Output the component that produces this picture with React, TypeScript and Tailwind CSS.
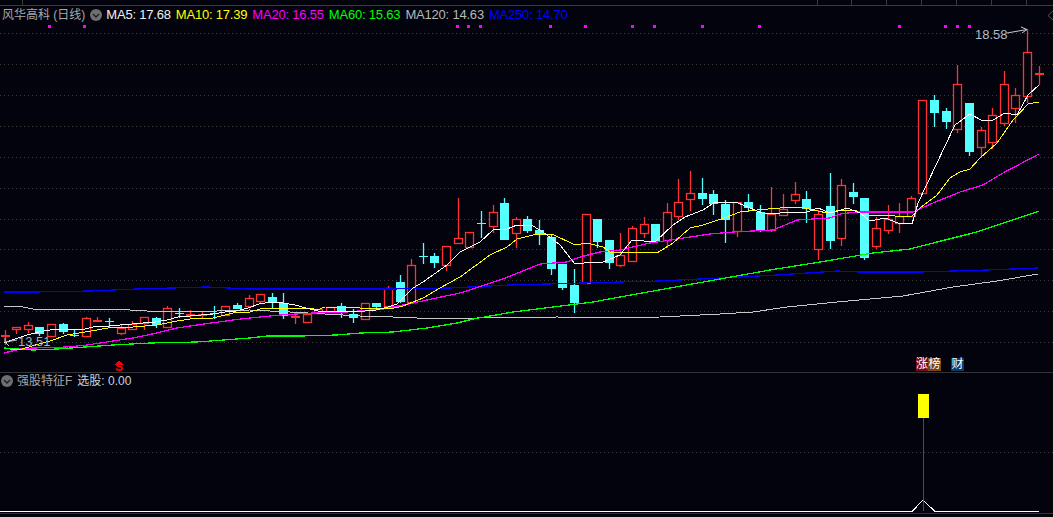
import React from 'react';

type Candle = [number, number, number, number, 'r' | 'c'];

// top, bottom, wick top, wick bottom, colour
const candles: Candle[] = [
  [335, 336, 330, 345, 'r'], [327, 329, 327, 334, 'r'], [325, 329, 322, 333, 'r'], [327, 333, 327, 336, 'c'],
  [324, 336, 324, 336, 'r'], [324, 331, 323, 334, 'c'], [335, 335, 329, 337, 'c'], [318, 336, 317, 337, 'r'],
  [320, 321, 317, 322, 'r'], [321, 322, 318, 327, 'c'], [328, 333, 324, 335, 'r'], [324, 329, 321, 330, 'r'],
  [317, 323, 317, 330, 'r'], [318, 324, 317, 328, 'c'], [308, 327, 306, 327, 'r'], [313, 313, 308, 318, 'c'],
  [314, 315, 310, 319, 'r'], [314, 314, 311, 318, 'r'], [313, 313, 306, 319, 'c'], [306, 315, 306, 316, 'r'],
  [305, 308, 303, 309, 'c'], [298, 306, 295, 307, 'r'], [294, 301, 294, 304, 'r'], [297, 301, 293, 309, 'c'],
  [303, 315, 293, 319, 'c'], [316, 317, 312, 324, 'r'], [314, 322, 314, 323, 'r'], [309, 313, 309, 313, 'r'],
  [307, 312, 307, 313, 'r'], [306, 312, 303, 318, 'c'], [314, 317, 309, 323, 'c'], [303, 319, 303, 319, 'r'],
  [303, 306, 303, 309, 'c'], [288, 306, 286, 308, 'r'], [282, 301, 275, 303, 'c'], [265, 302, 259, 303, 'r'],
  [256, 256, 243, 264, 'c'], [256, 262, 253, 268, 'c'], [246, 265, 246, 271, 'r'], [238, 243, 198, 243, 'r'],
  [232, 247, 232, 247, 'r'], [223, 223, 211, 238, 'c'], [212, 226, 205, 233, 'r'], [203, 239, 198, 239, 'c'],
  [219, 233, 217, 248, 'r'], [219, 230, 216, 233, 'c'], [230, 233, 220, 245, 'c'], [237, 268, 235, 275, 'c'],
  [264, 287, 264, 290, 'c'], [285, 302, 269, 313, 'c'], [214, 283, 214, 283, 'r'], [219, 241, 219, 248, 'c'],
  [240, 262, 240, 269, 'c'], [255, 265, 233, 267, 'r'], [228, 261, 226, 262, 'r'], [224, 233, 217, 238, 'r'],
  [224, 240, 224, 240, 'c'], [212, 240, 203, 248, 'r'], [202, 216, 179, 220, 'r'], [193, 199, 171, 211, 'r'],
  [193, 198, 178, 205, 'c'], [194, 203, 190, 215, 'c'], [204, 219, 200, 243, 'c'], [202, 231, 202, 237, 'r'],
  [202, 207, 194, 212, 'c'], [212, 230, 205, 232, 'c'], [214, 230, 187, 232, 'r'], [209, 215, 194, 216, 'r'],
  [194, 200, 182, 204, 'r'], [199, 208, 191, 223, 'c'], [214, 249, 210, 260, 'r'], [206, 240, 173, 249, 'c'],
  [185, 238, 179, 246, 'r'], [192, 196, 183, 204, 'c'], [198, 257, 198, 260, 'c'], [228, 246, 217, 249, 'r'],
  [219, 230, 205, 234, 'r'], [216, 223, 203, 233, 'r'], [198, 216, 196, 216, 'r'], [100, 193, 100, 193, 'r'],
  [100, 112, 95, 127, 'c'], [111, 121, 108, 129, 'c'], [84, 129, 65, 133, 'r'], [103, 151, 103, 156, 'c'],
  [130, 147, 127, 158, 'r'], [115, 142, 108, 149, 'r'], [84, 123, 71, 126, 'r'], [95, 108, 88, 123, 'r'],
  [52, 96, 29, 103, 'r'], [73, 74, 66, 85, 'r'],
];

const ma5 =
  '4,343 15,339 27,335 39,332 50,330 62,329 74,330 85,329 97,326 109,326 120,325 132,324 143,323 155,322 167,320 178,317 190,316 201,315 213,314 225,312 236,311 248,308 259,304 271,302 283,303 295,305 306,308 318,311 330,312 341,311 353,312 365,311 376,310 388,307 397,304 413,288 423,282 447,265 460,252 480,242 493,230 507,229 517,225 533,226 543,232 560,245 575,264 593,262 603,262 620,255 632,240 655,242 673,225 685,217 703,210 715,202 738,203 750,208 762,213 780,213 807,212 818,208 830,213 838,211 847,208 860,213 870,221 885,218 898,223 912,224 918,203 955,125 970,114 983,121 993,120 1005,113 1017,115 1028,95 1039,85';
const ma10 =
  '10,350 22,349 39,344 50,341 67,335 97,330 113,327 133,327 157,325 177,321 197,318 213,318 233,313 250,312 260,309 270,308 310,308 317,310 325,307 360,308 390,309 403,306 423,298 440,288 460,277 490,255 507,247 517,239 537,234 552,234 575,245 587,243 603,247 610,252 650,252 657,253 673,243 690,228 703,225 727,217 740,212 757,210 780,208 800,207 827,213 840,210 855,210 863,215 895,216 912,216 920,208 937,195 950,178 960,172 970,169 980,158 997,143 1013,120 1028,104 1039,102';
const ma20 =
  '4,353 20,349 33,348 67,347 87,345 113,341 133,338 157,333 177,328 197,325 233,320 250,318 280,315 313,313 347,312 383,309 413,303 460,293 503,279 540,264 567,262 580,257 600,252 620,250 650,243 677,239 710,234 733,232 773,230 797,220 830,218 840,214 857,212 913,212 933,203 960,192 983,185 1003,173 1039,154';
const ma60 =
  '4,348 33,350 57,349 113,345 150,343 197,342 250,338 267,336 300,336 337,335 360,333 393,332 427,328 457,323 473,319 513,312 553,307 593,302 620,297 670,288 720,279 770,270 820,262 873,253 910,249 937,242 973,233 1007,222 1039,211';
const ma120 =
  '4,306 23,307 33,309 113,309 147,311 217,311 250,310 290,312 325,314 360,316 393,317 417,318 477,318 557,317 620,318 660,317 720,314 753,312 787,307 837,302 903,296 953,287 997,281 1038,274';
const ma250 =
  '4,292 33,292 90,291 137,289 207,287 250,289 278,289 390,289 450,288 510,285 620,282 660,281 720,278 777,275 837,271 860,272 920,272 987,270 1038,268';

const dots = [49, 84, 457, 468, 480, 550, 585, 632, 654, 702, 759, 899, 945, 957, 969];
const ticks = [22, 817, 851, 886, 921, 956, 991, 1026];
const grid = [33, 64, 95, 126, 157, 188, 219, 249, 280, 311, 342];

const quotes = [
  { text: 'MA5: 17.68', color: 'text-[#f0f0f0]' },
  { text: 'MA10: 17.39', color: 'text-[#ffff00]' },
  { text: 'MA20: 16.55', color: 'text-[#ff00ff]' },
  { text: 'MA60: 15.63', color: 'text-[#00ff00]' },
  { text: 'MA120: 14.63', color: 'text-[#b8b8b8]' },
  { text: 'MA250: 14.70', color: 'text-[#0000ff]' },
];

const Chevron = () => (
  <svg width="12" height="12" viewBox="0 0 12 12" className="shrink-0">
    <circle cx="6" cy="6" r="6" fill="#6e6e6e" />
    <path d="M3 5 L6 8 L9 5" fill="none" stroke="#20202a" strokeWidth="1.4" />
  </svg>
);

const KLine = ({ candle, index }: { candle: Candle; index: number }) => {
  const [top, bottom, wickTop, wickBottom, kind] = candle;
  const x = Math.round(4.5 + 11.62 * index);
  const color = kind === 'r' ? '#ff3232' : '#54ffff';
  const thin = bottom - top <= 1;
  return (
    <g>
      <line x1={x + 0.5} x2={x + 0.5} y1={wickTop} y2={wickBottom} stroke={color} strokeWidth="1.3" shapeRendering="geometricPrecision" />
      {thin ? (
        <rect x={x - 4} y={top} width={9} height={Math.max(bottom - top, 1) + (kind === 'r' ? 1 : 0)} fill={color} />
      ) : kind === 'r' ? (
        <rect x={x - 3.5} y={top + 0.5} width={8} height={bottom - top} fill="#02030d" stroke={color} strokeWidth="1.3" shapeRendering="geometricPrecision" />
      ) : (
        <rect x={x - 4} y={top} width={9} height={bottom - top + 1} fill={color} />
      )}
    </g>
  );
};

export default function App() {
  return (
    <div className="flex h-[517px] w-[1053px] flex-col overflow-hidden bg-[#02030d] font-['Liberation_Sans','Noto_Sans_CJK_SC',sans-serif] text-[13px]">
      <div className="relative h-[373px] shrink-0 border-b border-[#333333]">
        <svg width="1053" height="372" viewBox="0 0 1053 372" shapeRendering="crispEdges" className="absolute inset-0">
          <line x1="0" x2="1053" y1="5.5" y2="5.5" stroke="#3a3a3a" />
          {ticks.map((x) => (
            <line key={x} x1={x + 0.5} x2={x + 0.5} y1="0" y2="5" stroke="#3a3a3a" />
          ))}
          {grid.map((y) => (
            <line key={y} x1="0" x2="1053" y1={y + 0.5} y2={y + 0.5} stroke="#3c3c38" strokeDasharray="1 3" />
          ))}
          {dots.map((x) => (
            <rect key={x} x={x - 1} y="25" width="3" height="3" fill="#ff00ff" />
          ))}
          {candles.map((c, i) => (
            <KLine key={i} candle={c} index={i} />
          ))}
          <g fill="none">
            <polyline points={ma250} stroke="#0000ff" strokeWidth="1.25" />
            <polyline points={ma120} stroke="#c8c8c8" />
            <polyline points={ma60} stroke="#00ff00" strokeWidth="1.25" />
            <polyline points={ma20} stroke="#ff00ff" strokeWidth="1.25" />
            <polyline points={ma10} stroke="#ffff00" />
            <polyline points={ma5} stroke="#ffffff" />
          </g>
          <g shapeRendering="auto" fill="none" stroke="#c8c8c8">
            <path d="M5 342 L17 340 M5 342 L5 338 M5 342 L9 346" />
            <path d="M1007 33 L1027 29.5 M1021 27 L1027 29.5 L1022 33" />
            <path d="M1053 11 L1048 15.5 L1053 20" stroke="#555555" />
          </g>
          <polygon points="119,360 115,364.5 123,364.5" fill="#ff0000" />
        </svg>
        <div className="relative flex h-[28px] items-center pb-[1px] pl-[2px] pt-[2px]">
          <span className="text-[12px] text-[#a8a8a8]">风华高科 (日线)</span>
          <span className="ml-[5px] mr-[4px]">
            <Chevron />
          </span>
          <div className="flex gap-[5px] tracking-[-0.2px]">
            {quotes.map((q) => (
              <span key={q.text} className={q.color}>
                {q.text}
              </span>
            ))}
          </div>
        </div>
        <span className="absolute left-[18px] top-[332px] text-[#a4b4c0]">13.51</span>
        <span className="absolute left-[975px] top-[25px] text-[#b4bcc4]">18.58</span>
        <span className="absolute left-[115px] top-[361px] text-[12px] font-bold leading-[12px] text-[#ff0000]">S</span>
        <div className="absolute left-[916px] top-[358px] flex h-[13px] items-center text-[12px] leading-[13px] text-white">
          <span className="w-[12px] bg-[#7a0a14] text-center">涨</span>
          <span className="w-[13px] bg-[#7a4310] text-center">榜</span>
          <span className="ml-[10px] w-[13px] bg-[#0d3a6c] text-center">财</span>
        </div>
      </div>
      <div className="relative flex-1">
        <svg width="1053" height="144" viewBox="0 373 1053 144" shapeRendering="crispEdges" className="absolute inset-0">
          <line x1="0" x2="1053" y1="452.5" y2="452.5" stroke="#3c3c38" strokeDasharray="1 3" />
          <line x1="0" x2="1053" y1="513.5" y2="513.5" stroke="#333333" />
          <polyline points="0,511.5 912,511.5 923,500 935,511.5 1039,511.5" fill="none" stroke="#ffffff" />
          <line x1="923.5" x2="923.5" y1="418" y2="511" stroke="#ff0000" />
          <rect x="918" y="394" width="11" height="24" fill="#ffff00" />
        </svg>
        <div className="relative flex h-[15px] items-center pl-[1px] pt-[1px] text-[12px]">
          <Chevron />
          <span className="ml-[4px] text-[#a8a8a8]">强股特征F</span>
          <span className="ml-[5px] text-[#c8d4dc]">选股: 0.00</span>
        </div>
      </div>
    </div>
  );
}
